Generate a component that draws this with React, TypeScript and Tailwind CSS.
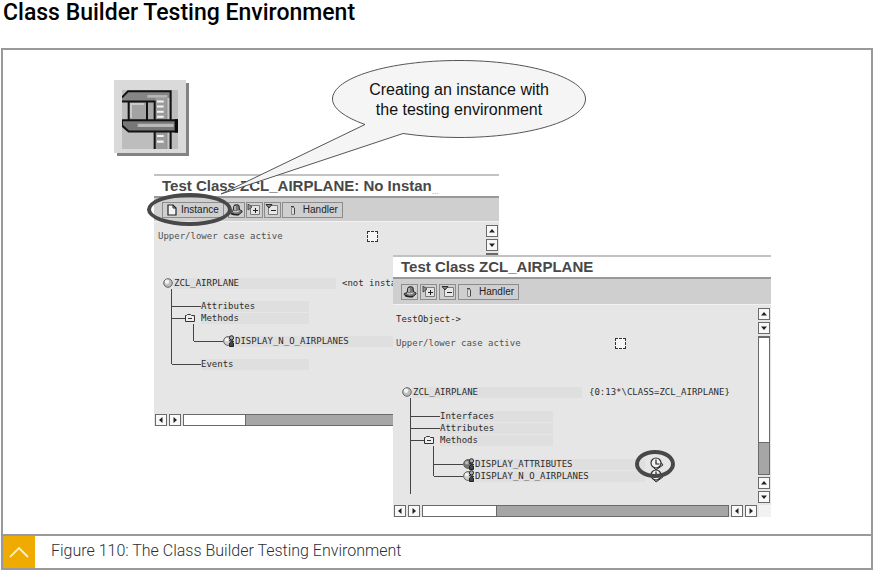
import React from "react";

const MONO = "font-['DejaVu_Sans_Mono','Liberation_Mono',monospace]";

function PageIcon() {
  return (
    <svg width="10" height="12" viewBox="0 0 10 12" aria-hidden="true">
      <path d="M1 1h5l3 3v7H1z" fill="#f4f4f4" stroke="#222" strokeWidth="1.2" />
      <path d="M6 1v3h3" fill="none" stroke="#222" />
    </svg>
  );
}

function HatIcon() {
  return (
    <svg width="14" height="12" viewBox="0 0 14 12" aria-hidden="true">
      <path d="M1 8c0-1 2-1 3-1L5 1.500c1-1 4-1 5 0L10.500 6c2 0 3 1 2.500 2l-3 2.500C7 11 1 10 1 8z" fill="#777" stroke="#222" />
      <path d="M4 7c2 1.500 5 1 6.500-.5M6 2v4" fill="none" stroke="#e8e8e8" />
      <path d="M2 9.500c3 1.500 6 1.500 8 1" fill="none" stroke="#222" strokeWidth="1.4" />
    </svg>
  );
}

function ExpandIcon() {
  return (
    <svg width="14" height="12" viewBox="0 0 14 12" aria-hidden="true">
      <path d="M3.500 1.500h9v9h-9z" fill="#e4e4e4" stroke="#7a7a7a" />
      <path d="M1 0l4 3-4 3z" fill="#999" stroke="#333" strokeWidth=".8" />
      <path d="M6 6.500h5M8.500 4v5" stroke="#222" />
    </svg>
  );
}

function CollapseIcon() {
  return (
    <svg width="14" height="12" viewBox="0 0 14 12" aria-hidden="true">
      <path d="M3.500 1.500h9v9h-9z" fill="#e8e8e8" stroke="#7a7a7a" />
      <path d="M1 .5h6L4 4z" fill="#888" stroke="#222" strokeWidth=".9" />
      <path d="M6 6.500h5" stroke="#222" />
    </svg>
  );
}

function HandlerIcon() {
  return (
    <svg width="4" height="10" viewBox="0 0 4 10" aria-hidden="true">
      <path d="M.5 2.500h3v7h-3z" fill="#ddd" stroke="#888" />
      <path d="M0 1.500h3M3.500 3v6" stroke="#444" />
    </svg>
  );
}

function BallIcon() {
  return (
    <svg className="shrink-0" width="10" height="10" viewBox="0 0 10 10" aria-hidden="true">
      <circle cx="5" cy="5" r="4.300" fill="#bdbdbd" stroke="#555" strokeWidth=".9" />
      <circle cx="4" cy="3.800" r="2.200" fill="#f2f2f2" />
    </svg>
  );
}

function MethodIcon({ dark = false }: { dark?: boolean }) {
  return (
    <svg className="shrink-0" width="12" height="12" viewBox="0 0 12 12" aria-hidden="true">
      <circle cx="5" cy="6" r="4.400" fill={dark ? "#777" : "#cfcfcf"} stroke="#555" strokeWidth=".9" />
      <circle cx="3.800" cy="4.800" r="1.800" fill={dark ? "#bbb" : "#f4f4f4"} />
      <circle cx="8.500" cy="2.800" r="2.100" fill="#aaa" stroke="#222" />
      <path d="M6 5.500l5 1M6.500 11.500V8l2-1.500 2 1.500v3.500z" fill="#444" stroke="#222" />
    </svg>
  );
}

function FolderIcon() {
  return (
    <svg className="shrink-0" width="10" height="8" viewBox="0 0 10 8" aria-hidden="true">
      <path d="M.5 7.500v-6h1l1-1h3l1 1h3v6z" fill="#eee" stroke="#333" />
      <path d="M3 4.500h4" stroke="#333" />
    </svg>
  );
}

function RunIcon() {
  return (
    <svg width="14" height="14" viewBox="0 0 14 14" aria-hidden="true">
      <path d="M6 13l7-5-1.500-2L4 11z" fill="#bbb" stroke="#333" />
      <circle cx="6" cy="6" r="5" fill="#f2f2f2" stroke="#333" strokeWidth="1.200" />
      <path d="M6 2.500V7h3.500" fill="none" stroke="#222" strokeWidth="1.200" />
    </svg>
  );
}

function CaliperPicture() {
  return (
    <svg width="56" height="59" viewBox="68 60 168 176" preserveAspectRatio="none" aria-hidden="true">
      <rect x="68" y="60" width="168" height="176" fill="#bdbdbd" />
      <path d="M68 80l18-16h126v172h-46V95H68z" fill="#858585" />
      <path d="M144 75h60v8h-60z" fill="#b5b5b5" />
      <path d="M88 95h56v55H88z" fill="#a3a3a3" />
      <path d="M92 99h42v6H98v38h-6z" fill="#c9c9c9" />
      <path d="M146 95h18v55h-18z" fill="#a8a8a8" />
      <path d="M168 84h34v66h-34zM168 184h34v52h-34z" fill="#9b9b9b" />
      <path d="M173 94h20M173 109h20M173 125h20M173 140h20M173 197h20M173 214h20" stroke="#f3f3f3" strokeWidth="6" />
      <path d="M204 84h7v66h-7zM204 184h7v52h-7z" fill="#c3c3c3" />
      <path d="M68 82l18-18h128v172M68 94h98v142M88 94v56M143 94v56" fill="none" stroke="#111" strokeWidth="6" />
      <path d="M68 150h165v34H88l-20-18z" fill="#777" stroke="#111" strokeWidth="6" />
      <path d="M115 161h108v9H115z" fill="#b9b9b9" />
      <path d="M226 147h10v40h-10z" fill="#0a0a0a" />
    </svg>
  );
}

type Dir = "up" | "down" | "left" | "right";
const ARROWS: Record<Dir, string> = {
  up: "M1 5.500L4 2l3 3.500z",
  down: "M1 2.500L4 6l3-3.500z",
  left: "M5.500 1L2 4l3.500 3z",
  right: "M2.500 1L6 4 2.500 7z",
};

function ScrollButton({ dir }: { dir: Dir }) {
  return (
    <button
      type="button"
      aria-label={"Scroll " + dir}
      className="flex size-3 shrink-0 items-center justify-center border border-[#6a6a6a] bg-[#f8f8f8]"
    >
      <svg width="8" height="8" viewBox="0 0 8 8" aria-hidden="true">
        <path d={ARROWS[dir]} fill="#222" />
      </svg>
    </button>
  );
}

function IconButton({ label, children }: { label: string; children: React.ReactNode }) {
  return (
    <button
      type="button"
      aria-label={label}
      className="flex h-4 w-[17px] items-center justify-center border border-[#8c8c8c] bg-[#cfcfcf]"
    >
      {children}
    </button>
  );
}

function ToolButtons() {
  return (
    <>
      <IconButton label="Hat"><HatIcon /></IconButton>
      <IconButton label="Expand"><ExpandIcon /></IconButton>
      <IconButton label="Collapse"><CollapseIcon /></IconButton>
      <button
        type="button"
        className="flex h-4 items-center gap-2 border border-[#8c8c8c] bg-[#cfcfcf] pr-1 pl-2 text-[10px] leading-3 text-[#222]"
      >
        <HandlerIcon />
        Handler
      </button>
    </>
  );
}

function TitleBar({ children }: { children: React.ReactNode }) {
  return (
    <h2 className="flex h-6 items-center border-t-2 border-b-2 border-t-[#c2c2c2] border-b-[#999] bg-white pl-2 text-[15px] leading-5 font-bold text-[#484848]">
      {children}
    </h2>
  );
}

function CaseOption({ id, gap }: { id: string; gap: string }) {
  return (
    <div className={"flex h-3 items-center " + gap}>
      <label htmlFor={id} className="text-[#505050]">Upper/lower case active</label>
      <input id={id} type="checkbox" className="size-[11px] appearance-none border border-dashed border-[#333] bg-[#f6f6f6]" />
    </div>
  );
}

function Branch({ label, width, folder = false }: { label: string; width: string; folder?: boolean }) {
  return (
    <div className="flex h-3 items-center">
      {folder ? (
        <>
          <span className="h-px w-[13px] bg-[#444]" />
          <FolderIcon />
          <span className="w-1.5" />
        </>
      ) : (
        <span className="h-px w-[29px] bg-[#444]" />
      )}
      <span className={"h-[11px] bg-[#dfdfdf] leading-[11px] " + width}>{label}</span>
    </div>
  );
}

function MethodRow({ label, dark = false, children }: { label: string; dark?: boolean; children?: React.ReactNode }) {
  return (
    <div className="flex h-3 items-center">
      <span className="h-px w-[29px] shrink-0 bg-[#444]" />
      <MethodIcon dark={dark} />
      <span className="h-[11px] w-[170px] shrink-0 bg-[#dfdfdf] leading-[11px]">{label}</span>
      {children}
    </div>
  );
}

function NoInstanceWindow() {
  return (
    <section className="absolute top-[124px] left-[151px] flex w-[345px] flex-col bg-[#e6e6e6]">
      <TitleBar>
        Test Class ZCL_AIRPLANE: No Instan
        <span className="self-end text-[8px] leading-2 font-normal text-[#888]">...</span>
      </TitleBar>
      <div className="flex h-6 items-center gap-px border-b border-[#f2f2f2] bg-[#cfcfcf] pl-2">
        <button
          type="button"
          className="flex h-4 items-center gap-1 border border-[#8c8c8c] bg-[#cfcfcf] px-1 text-[10px] leading-3 text-[#222]"
        >
          <PageIcon />
          Instance
        </button>
        <span className="w-0.5" />
        <ToolButtons />
      </div>
      <div className="flex">
        <div className="h-[192px] grow pt-2">
          <div className="pl-1">
            <CaseOption id="case-first" gap="gap-[84px]" />
          </div>
          <div className="mt-[35px] flex h-3 items-center pl-[9px]">
            <BallIcon />
            <span className="h-[11px] w-[163px] bg-[#dfdfdf] pl-px leading-[11px]">ZCL_AIRPLANE</span>
            <span className="ml-1.5">&lt;not insta</span>
          </div>
          <ul className="ml-[17px] flex flex-col border-l border-[#444] pt-[11px]">
            <li><Branch label="Attributes" width="w-[108px]" /></li>
            <li>
              <Branch label="Methods" width="w-[108px]" folder />
              <ul className="mb-[17px] ml-[21px] h-[17px] border-l border-[#444] pt-[11px]">
                <li><MethodRow label="DISPLAY_N_O_AIRPLANES" /></li>
              </ul>
            </li>
            <li className="-mb-1.5 h-3"><Branch label="Events" width="w-[108px]" /></li>
          </ul>
        </div>
        <div className="flex w-[13px] flex-col gap-0.5 pt-[3px]">
          <ScrollButton dir="up" />
          <ScrollButton dir="down" />
          <div className="w-3 grow border border-t-2 border-[#6a6a6a] bg-white" />
        </div>
      </div>
      <div className="flex gap-0.5 pl-px">
        <ScrollButton dir="left" />
        <ScrollButton dir="right" />
        <div className="flex grow border border-[#6a6a6a] bg-[#a6a6a6]">
          <div className="w-[62px] border-r border-[#6a6a6a] bg-white" />
        </div>
      </div>
    </section>
  );
}

function InstanceWindow() {
  return (
    <section className="absolute top-[205px] left-[390px] flex w-[378px] flex-col bg-[#e6e6e6]">
      <TitleBar>Test Class ZCL_AIRPLANE</TitleBar>
      <div className="flex h-[26px] items-center gap-0.5 border-b border-[#f2f2f2] bg-[#cfcfcf] pl-2">
        <ToolButtons />
      </div>
      <div className="flex">
        <div className="grow pt-2 pb-[9px] pl-[3px]">
          <p className="mb-3 h-3">TestObject-&gt;</p>
          <CaseOption id="case-second" gap="gap-[94px]" />
          <div className="mt-[37px] flex h-3 items-center pl-[6px]">
            <BallIcon />
            <span className="h-[11px] w-[170px] bg-[#dfdfdf] pl-px leading-[11px]">ZCL_AIRPLANE</span>
            <span className="ml-[7px]">{"{0:13*\\CLASS=ZCL_AIRPLANE}"}</span>
          </div>
          <ul className="ml-[14px] border-l border-[#444] pt-3 pb-3">
            <li><Branch label="Interfaces" width="w-[113px]" /></li>
            <li><Branch label="Attributes" width="w-[113px]" /></li>
            <li>
              <Branch label="Methods" width="w-[113px]" folder />
              <ul className="mb-1.5 ml-[22px] h-[30px] border-l border-[#444] pt-3">
                <li>
                  <MethodRow label="DISPLAY_ATTRIBUTES" dark>
                    <span className="relative z-10 ml-[5px]">
                      <RunIcon />
                      <span className="absolute -top-[7px] -left-[15px] h-7 w-10 rounded-[50%] border-4 border-[#484848]" />
                    </span>
                  </MethodRow>
                </li>
                <li>
                  <MethodRow label="DISPLAY_N_O_AIRPLANES">
                    <span className="ml-[5px]"><RunIcon /></span>
                  </MethodRow>
                </li>
              </ul>
            </li>
          </ul>
        </div>
        <div className="flex w-[13px] flex-col gap-0.5 pt-[3px]">
          <ScrollButton dir="up" />
          <ScrollButton dir="down" />
          <div className="flex w-3 grow flex-col justify-end border border-t-2 border-[#6a6a6a] bg-white">
            <div className="h-8 border-t border-[#6a6a6a] bg-[#a6a6a6]" />
          </div>
          <ScrollButton dir="up" />
          <ScrollButton dir="down" />
        </div>
      </div>
      <div className="flex gap-0.5 pt-0.5 pl-px">
        <ScrollButton dir="left" />
        <ScrollButton dir="right" />
        <div className="flex grow border border-[#6a6a6a] bg-[#a6a6a6]">
          <div className="w-[74px] border-r border-[#6a6a6a] bg-white" />
        </div>
        <ScrollButton dir="left" />
        <ScrollButton dir="right" />
        <span className="w-3 bg-[#f2f2f2]" />
      </div>
    </section>
  );
}

function Callout() {
  return (
    <div className="absolute top-[10px] left-[329px] flex h-[78px] w-[254px] items-center justify-center pt-0.5">
      <svg className="absolute inset-0 overflow-visible" width="254" height="78" viewBox="0 0 254 78" aria-hidden="true">
        <path
          d="M33 64.500C12 57 .5 48 .5 39 .5 17.700 57 .5 127 .5s126.500 17.200 126.500 38.500S197 77.500 127 77.500c-20 0-39-1.500-56-4L-111 134z"
          fill="#f5f5f5"
          stroke="#555"
        />
      </svg>
      <p className="relative text-center text-base leading-5 text-[#111]">
        Creating an instance with
        <br />
        the testing environment
      </p>
    </div>
  );
}

export default function App() {
  return (
    <main className="bg-white">
      <h1 className="h-12 pl-[3px] font-['Roboto','Noto_Sans',sans-serif] text-[23px] leading-[26px] font-medium text-black">
        Class Builder Testing Environment
      </h1>
      <figure className="mr-0.5 ml-px border-2 border-[#98999b]">
        <div className="relative h-[484px] overflow-hidden font-['Liberation_Sans',Arial,sans-serif]">
          <div className="absolute top-[30px] left-[111px] bg-[#dadada] px-2 pt-2.5 pb-1 shadow-[3px_3px_0_#838383]">
            <CaliperPicture />
          </div>
          <div className={"text-[9px] leading-3 text-[#2c2c2c] " + MONO}>
            <div className="[&_h2]:font-['Liberation_Sans',Arial,sans-serif] [&_button]:font-['Liberation_Sans',Arial,sans-serif]">
              <NoInstanceWindow />
              <InstanceWindow />
            </div>
          </div>
          <Callout />
          <span className="absolute top-[143px] left-[144px] h-[33px] w-[85px] rounded-[50%] border-4 border-[#484848]" />
        </div>
        <figcaption className="flex items-center gap-4 border-t-2 border-[#98999b] font-['Roboto','Noto_Sans',sans-serif] text-base leading-5 font-light text-[#2b2f3a]">
          <a href="#top" aria-label="Back to top" className="flex size-8 items-center justify-center bg-[#f0ab00]">
            <svg width="20" height="12" viewBox="0 0 20 12" aria-hidden="true">
              <path d="M1 11l9-9 9 9" fill="none" stroke="#fdeec8" strokeWidth="1.800" />
            </svg>
          </a>
          <span className="pb-0.5">Figure 110: The Class Builder Testing Environment</span>
        </figcaption>
      </figure>
    </main>
  );
}
